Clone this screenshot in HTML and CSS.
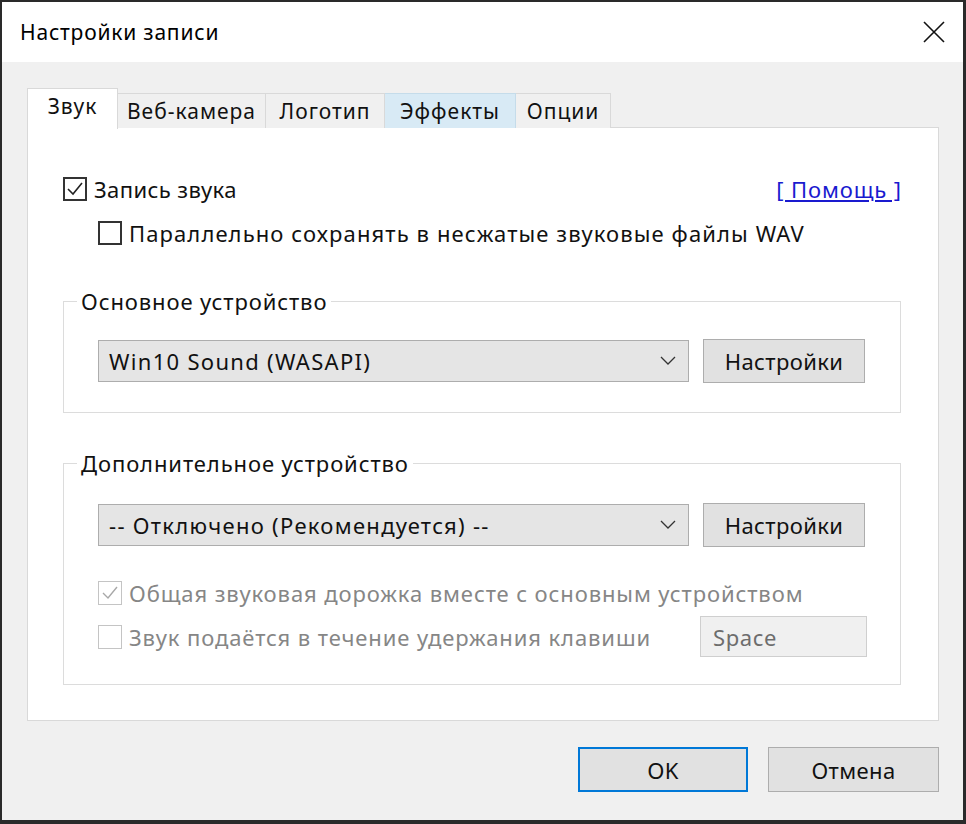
FILE: index.html
```html
<!DOCTYPE html>
<html lang="ru">
<head>
    <meta charset="UTF-8">
    <title>Настройки записи</title>
    <link rel="stylesheet" href="styles.css">
</head>
<body>
    <div class="window">
        <div class="titlebar">
            <span class="title">Настройки записи</span>
            <svg class="close" width="24" height="24" viewBox="0 0 24 24">
                <path d="M2 2 L22 22 M22 2 L2 22" stroke="#111" stroke-width="1.6" fill="none"/>
            </svg>
        </div>

        <div class="content">
            <div class="tabs">
                <div class="tab active">Звук</div>
                <div class="tab tab-cam">Веб-камера</div>
                <div class="tab tab-logo">Логотип</div>
                <div class="tab tab-fx hover">Эффекты</div>
                <div class="tab tab-opt">Опции</div>
            </div>

            <div class="panel">
                <div class="row row-first">
                    <label class="check">
                        <span class="box checked">
                            <svg width="20" height="20" viewBox="0 0 20 20"><path d="M3 10 L8 15 L17 4" stroke="#222" stroke-width="1.6" fill="none"/></svg>
                        </span>
                        <span class="tight">Запись звука</span>
                    </label>
                    <a class="help" href="#">[ Помощь ]</a>
                </div>
                <div class="row row-sub">
                    <label class="check">
                        <span class="box"></span>
                        <span class="wide">Параллельно сохранять в несжатые звуковые файлы WAV</span>
                    </label>
                </div>

                <fieldset class="group group-main">
                    <legend>Основное устройство</legend>
                    <div class="device-row">
                        <div class="combo">
                            <span>Win10 Sound (WASAPI)</span>
                            <svg width="16" height="10" viewBox="0 0 16 10"><path d="M1 1 L8 8 L15 1" stroke="#333" stroke-width="1.3" fill="none"/></svg>
                        </div>
                        <button class="btn">Настройки</button>
                    </div>
                </fieldset>

                <fieldset class="group group-extra">
                    <legend>Дополнительное устройство</legend>
                    <div class="device-row">
                        <div class="combo">
                            <span>-- Отключено (Рекомендуется) --</span>
                            <svg width="16" height="10" viewBox="0 0 16 10"><path d="M1 1 L8 8 L15 1" stroke="#333" stroke-width="1.3" fill="none"/></svg>
                        </div>
                        <button class="btn">Настройки</button>
                    </div>
                    <div class="row row-track">
                        <label class="check disabled">
                            <span class="box checked">
                                <svg width="20" height="20" viewBox="0 0 20 20"><path d="M3 10 L8 15 L17 4" stroke="#a8a8a8" stroke-width="1.4" fill="none"/></svg>
                            </span>
                            Общая звуковая дорожка вместе с основным устройством
                        </label>
                    </div>
                    <div class="row row-key">
                        <label class="check disabled">
                            <span class="box"></span>
                            Звук подаётся в течение удержания клавиши
                        </label>
                        <div class="key-input">Space</div>
                    </div>
                </fieldset>
            </div>

            <div class="footer">
                <button class="btn btn-ok">OK</button>
                <button class="btn btn-cancel">Отмена</button>
            </div>
        </div>
    </div>
</body>
</html>
```

FILE: styles.css
```css
* {
    box-sizing: border-box;
    margin: 0;
    padding: 0;
}

:root {
    --face: #f0f0f0;
    --line: #d9d9d9;
    --btn: #e1e1e1;
    --btn-border: #adadad;
    --blue: #0078d7;
    --disabled: #868686;
}

body {
    width: 966px;
    height: 824px;
    font-family: "Noto Sans", "Open Sans", sans-serif;
    font-size: 22px;
    letter-spacing: 0.9px;
    color: #111;
    background: var(--face);
}

.window {
    width: 966px;
    height: 824px;
    display: flex;
    flex-direction: column;
    border-style: solid;
    border-color: #2a2a2a;
    border-width: 2px 3px 4px 2px;
    background: var(--face);
}

.titlebar {
    height: 60px;
    display: flex;
    align-items: center;
    justify-content: space-between;
    padding: 0 17px 0 18px;
    background: #fff;
}

.title {
    font-size: 21px;
    letter-spacing: 0.8px;
    color: #000;
}

/* tabs */
.content {
    flex: 1;
    display: flex;
    flex-direction: column;
    padding: 26px 24px 0 25px;
}

.tabs {
    height: 40px;
    display: flex;
    align-items: flex-end;
    position: relative;
    z-index: 1;
}

.tab {
    height: 35px;
    display: flex;
    align-items: center;
    justify-content: center;
    border: 1px solid var(--line);
    border-bottom: 0;
    border-left: 0;
    background: #f0f0f0;
    font-size: 21px;
    letter-spacing: 1px;
}

.tab.active {
    height: 41px;
    width: 91px;
    margin-bottom: -1px;
    border-left: 1px solid var(--line);
    background: #fff;
    padding-bottom: 6px;
}

.tab-cam { width: 148px; }
.tab-logo { width: 119px; }
.tab-fx { width: 131px; }
.tab-opt { width: 95px; }

.tab.hover {
    background: #d8eaf5;
    border-color: #c5dcea;
}

.panel {
    height: 594px;
    margin-top: -1px;
    border: 1px solid var(--line);
    background: #fff;
    padding: 49px 36px 0 35px;
}

.row {
    display: flex;
    align-items: center;
    justify-content: space-between;
    height: 24px;
}

.row-sub {
    margin-top: 20px;
    padding-left: 35px;
}

.check {
    display: flex;
    align-items: center;
    gap: 7px;
    white-space: nowrap;
}

.tight {
    letter-spacing: 0.4px;
}

.wide {
    letter-spacing: 1.1px;
}

.box {
    width: 24px;
    height: 24px;
    border: 2px solid #333;
    background: #fff;
    display: flex;
    align-items: center;
    justify-content: center;
}

.check.disabled {
    color: var(--disabled);
}

.check.disabled .box {
    border: 1px solid #c4c4c4;
}

.help {
    color: #1a1acf;
    text-decoration: underline;
}

/* group boxes */
.group {
    border: 1px solid #dcdcdc;
    margin-right: 1px;
    padding: 0 35px 27px 34px;
}

.group legend {
    margin-left: -21px;
    padding: 0 4px;
    line-height: 28px;
}

.group-main {
    margin-top: 42px;
    padding-bottom: 29px;
}

.group-extra {
    margin-top: 36px;
}

.device-row {
    display: flex;
    align-items: center;
    gap: 14px;
    height: 44px;
    margin-top: 24px;
}

.group-extra .device-row {
    margin-top: 26px;
}

.combo {
    width: 591px;
    height: 42px;
    display: flex;
    align-items: center;
    justify-content: space-between;
    padding: 0 12px 0 10px;
    background: #e5e5e5;
    border: 1px solid var(--btn-border);
    letter-spacing: 1.3px;
}

.btn {
    font-family: inherit;
    font-size: 22px;
    letter-spacing: 0.4px;
    color: #111;
    width: 162px;
    height: 44px;
    background: var(--btn);
    border: 1px solid var(--btn-border);
}

.row-track {
    margin-top: 34px;
    justify-content: flex-start;
}

.row-key {
    height: 41px;
    margin-top: 11px;
}

.key-input {
    width: 167px;
    height: 41px;
    display: flex;
    align-items: center;
    padding-left: 12px;
    background: #f0f0f0;
    border: 1px solid #cfcfcf;
    color: #6d6d6d;
    letter-spacing: 0.6px;
    margin-right: -2px;
}

/* bottom buttons */
.footer {
    display: flex;
    justify-content: flex-end;
    gap: 20px;
    margin-top: 26px;
}

.btn-ok {
    width: 170px;
    height: 45px;
    border: 2px solid var(--blue);
}

.btn-cancel {
    width: 171px;
    height: 45px;
}
```
